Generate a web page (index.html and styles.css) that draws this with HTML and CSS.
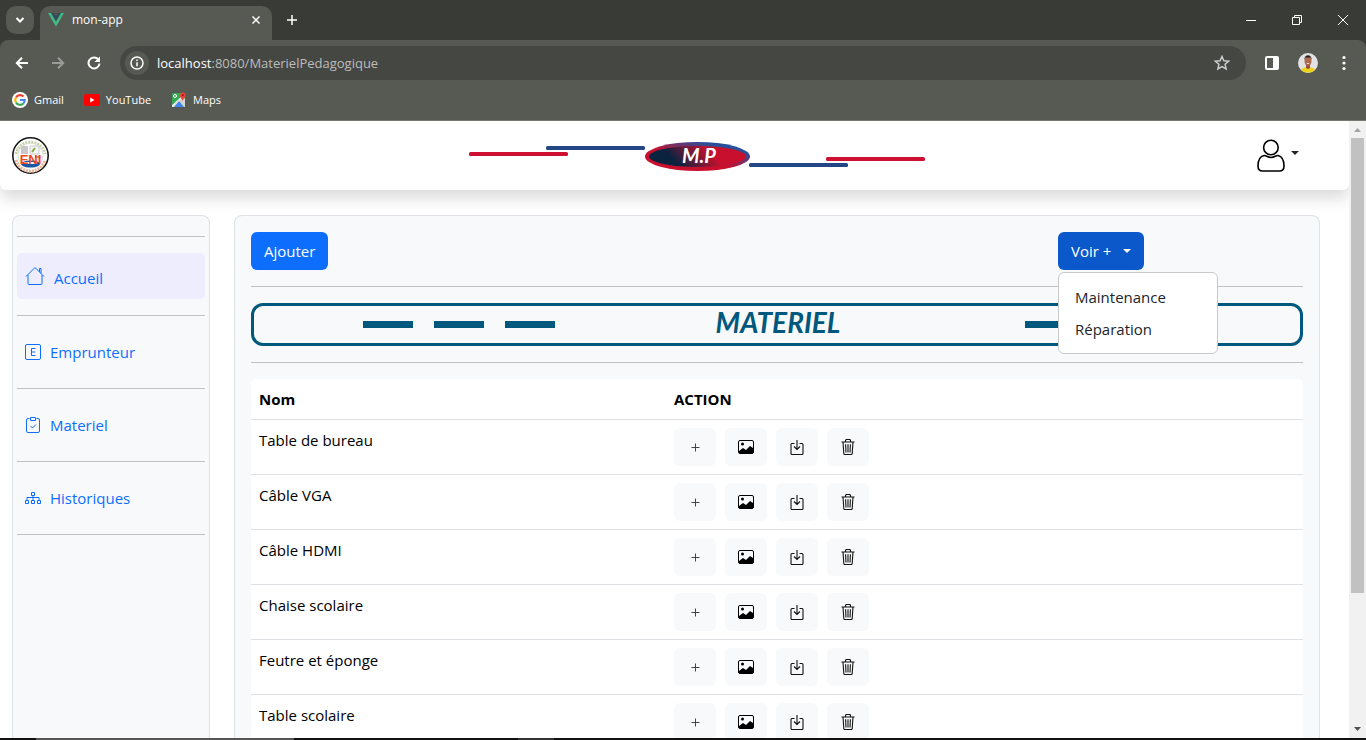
FILE: index.html
```html
<!DOCTYPE html>
<html lang="fr">
<head>
<meta charset="utf-8">
<title>mon-app</title>
<link rel="stylesheet" href="styles.css">
</head>
<body>
<svg class="sprite" aria-hidden="true">
  <symbol id="plus" viewBox="0 0 16 16"><path d="M8.500 4.500v8M4.500 8.500h8" fill="none" stroke="#444" stroke-width="1"/></symbol>
  <symbol id="image" viewBox="0 0 16 16"><rect x=".5" y="1.500" width="15" height="13" rx="1.500" fill="none" stroke="#000"/><circle cx="4.500" cy="5" r="1.500"/><path d="M1 12l4-3 3 2 4-4 3 2v5H1z"/></symbol>
  <symbol id="save" viewBox="0 0 16 16"><path d="M5.500 4.500H3A1 1 0 0 0 2 5.500v9a1 1 0 0 0 1 1h10a1 1 0 0 0 1-1v-9a1 1 0 0 0-1-1h-2.500M8 1v9.500M5 7.500l3 3 3-3" fill="none" stroke="#111" stroke-width="1.100"/></symbol>
  <symbol id="trash" viewBox="0 0 16 16"><path d="M1.500 3h13M5.500 3V1.500a1 1 0 0 1 1-1h3a1 1 0 0 1 1 1V3M3 3l.8 11.500a1 1 0 0 0 1 1h6.400a1 1 0 0 0 1-1L13 3M5.600 5.200l.4 8.300M8 5.200v8.300M10.400 5.200l-.4 8.300" fill="none" stroke="#111" stroke-width="1.100"/></symbol>
</svg>

<header class="browser">
  <div class="tabs">
    <button class="tab-search" aria-label="Rechercher des onglets"><svg width="12" height="12" viewBox="0 0 12 12"><path d="M2.500 4L6 7.500 9.500 4" class="line2"/></svg></button>
    <div class="tab">
      <svg width="16" height="14" viewBox="0 0 16 14"><path d="M0 0h3.200L8 8.300 12.800 0H16L8 13.800z" fill="#41b883"/><path d="M3.200 0h3L8 3.200 9.800 0h3L8 8.300z" fill="#35495e"/></svg>
      <span class="tab-title">mon-app</span>
      <button class="icon-btn" aria-label="Fermer l'onglet"><svg width="10" height="10" viewBox="0 0 10 10"><path d="M1.500 1.500l7 7M8.500 1.500l-7 7" class="line15"/></svg></button>
    </div>
    <button class="icon-btn new-tab" aria-label="Nouvel onglet"><svg width="12" height="12" viewBox="0 0 12 12"><path d="M6 1v10M1 6h10" class="line15"/></svg></button>
    <div class="window-controls">
      <button class="icon-btn" aria-label="Réduire"><svg width="12" height="12" viewBox="0 0 12 12"><path d="M1 6.500h10" class="line1"/></svg></button>
      <button class="icon-btn" aria-label="Restaurer"><svg width="12" height="12" viewBox="0 0 12 12"><path d="M1.500 3.500h7v7h-7zM3.500 3.500v-2h7v7h-2" class="line1"/></svg></button>
      <button class="icon-btn" aria-label="Fermer"><svg width="12" height="12" viewBox="0 0 12 12"><path d="M1 1l10 10M11 1L1 11" class="line1"/></svg></button>
    </div>
  </div>

  <div class="toolbar">
    <button class="icon-btn" aria-label="Précédent"><svg width="14" height="14" viewBox="0 0 14 14"><path d="M13 7H2M7 1.800L1.800 7 7 12.200" class="line2"/></svg></button>
    <button class="icon-btn dim" aria-label="Suivant"><svg width="14" height="14" viewBox="0 0 14 14"><path d="M1 7h11M7 1.800L12.200 7 7 12.200" class="line2"/></svg></button>
    <button class="icon-btn" aria-label="Actualiser"><svg width="14" height="14" viewBox="0 0 14 14"><path d="M11.300 3.500A5.500 5.500 0 1 0 12.500 7.500" class="line2"/><path d="M13 .5v5.500H7.500L9.500 4h1.500V2.500z" fill="#fff"/></svg></button>
    <div class="address">
      <button class="site-info" aria-label="Informations sur le site"><svg width="14" height="14" viewBox="0 0 14 14"><circle cx="7" cy="7" r="6" class="line15"/><path d="M7 6.200v4M7 3.500v1.500" class="line15"/></svg></button>
      <label for="url">localhost</label><input id="url" type="text" value=":8080/MaterielPedagogique">
      <button class="icon-btn" aria-label="Favori"><svg width="16" height="16" viewBox="0 0 16 16"><path d="M8 1.500l1.900 4.300 4.700.4-3.500 3.100 1 4.600L8 11.500l-4.100 2.400 1-4.600L1.400 6.200l4.700-.4z" fill="none" stroke="#ccc" stroke-width="1.500"/></svg></button>
    </div>
    <div class="tools">
      <button class="icon-btn" aria-label="Panneau latéral"><svg width="16" height="16" viewBox="0 0 16 16"><rect x="2" y="2" width="12" height="12" rx="1" class="line2"/><path d="M9 2h5v12H9z" fill="#fff"/></svg></button>
      <button class="icon-btn" aria-label="Profil"><svg width="20" height="20" viewBox="0 0 20 20"><circle cx="10" cy="10" r="10" fill="#e3e2e4"/><path d="M3 17a10 10 0 0 0 14 0c-1-2-3-2.500-4-2.500H7c-1 0-3 .5-4 2.500z" fill="#f0d31f"/><path d="M8 11h4v4l-2 1-2-1z" fill="#925139"/><ellipse cx="10" cy="8" rx="3.500" ry="5" fill="#ad6a4c"/><path d="M6.300 7c-.5-6.500 7.900-6.500 7.400 0l-1-2.500H7.300z" fill="#2b211f"/><path d="M8.800 10.500h2.400" stroke="#fff" stroke-width=".8"/></svg></button>
      <button class="icon-btn" aria-label="Menu"><svg width="16" height="16" viewBox="0 0 16 16" fill="#fff"><circle cx="8" cy="2.500" r="1.600"/><circle cx="8" cy="8" r="1.600"/><circle cx="8" cy="13.500" r="1.600"/></svg></button>
    </div>
  </div>

  <nav class="bookmarks">
    <a href="#"><svg width="16" height="16" viewBox="0 0 16 16"><circle cx="8" cy="8" r="8" fill="#fff"/><g fill="none" stroke-width="2.200"><path d="M11.500 4.500A4.700 4.700 0 0 0 4 5.500" stroke="#ea4335"/><path d="M4 5.500a4.700 4.700 0 0 0 0 5" stroke="#fbbc05"/><path d="M4 10.500a4.700 4.700 0 0 0 7.300 1" stroke="#34a853"/><path d="M8 8h4.700a4.700 4.700 0 0 1-1.400 3.500" stroke="#4285f4"/></g></svg>Gmail</a>
    <a href="#"><svg width="16" height="16" viewBox="0 0 16 16"><rect y="2" width="16" height="12" rx="2" fill="#f00"/><path d="M6.200 5.500v5L10.500 8z" fill="#fff"/></svg>YouTube</a>
    <a href="#"><svg width="16" height="16" viewBox="0 0 16 16"><rect x="1" y="1" width="13" height="14" rx="1" fill="#34a853"/><path d="M3 15l5-6 5 6z" fill="#4285f4"/><path d="M1 15V13L11 4l3 4-6 1-5 6z" fill="#e8e8e8"/><path d="M8 9l6-3v9h-1z" fill="#d5d5d5"/><circle cx="4" cy="4" r="1.500" fill="none" stroke="#fff"/><path d="M11.500 9C11 7 9 6 9 3.300a2.800 2.800 0 0 1 5.600 0C14.600 6 12 7 11.500 9z" fill="#ea4335"/><circle cx="11.800" cy="3.300" r="1" fill="#8b1a12"/></svg>Maps</a>
  </nav>
</header>

<div class="viewport">
  <div class="page">
    <header class="app-header">
      <a href="#" class="logo" aria-label="ENI">
        <svg width="37" height="37" viewBox="0 0 37 37"><circle cx="18.500" cy="18.500" r="17.700" fill="#fff" stroke="#171717" stroke-width="1.600"/><path d="M4 17a14.800 14.800 0 0 1 29 0" fill="none" stroke="#c5d3a5" stroke-width="3" stroke-dasharray="2 1"/><path d="M4 23a15 15 0 0 0 29 0" fill="none" stroke="#edb297" stroke-width="3" stroke-dasharray="2 1"/><circle cx="18.500" cy="18.500" r="12.500" fill="none" stroke="#ddd"/><path d="M9 9h7v8H9z" fill="#c9c9c9"/><path d="M18 9h9v8h-9z" fill="#f4f4f4" stroke="#ccc"/><path d="M20 15l3-4" stroke="#86aa3e" stroke-width="2"/><path d="M23 19l8 1-8 1z" fill="#777"/><ellipse cx="18.500" cy="27" rx="9.500" ry="3.500" fill="#1c57a5"/><path d="M12 26h13" stroke="#fff" stroke-width="2"/><text x="18.500" y="27" class="logo-text">ENI</text></svg>
      </a>
      <svg class="mp" width="456" height="30" viewBox="0 0 456 30">
        <defs>
          <linearGradient id="rim" x1="0" y1=".8" x2=".7" y2="0"><stop offset=".45" stop-color="#c8102e"/><stop offset=".9" stop-color="#28509a"/></linearGradient>
          <linearGradient id="core" x1="0" y1=".5" x2="1" y2=".3"><stop offset=".22" stop-color="#0c2340"/><stop offset=".65" stop-color="#c8102e"/></linearGradient>
        </defs>
        <rect y="11" width="99" height="4" rx="1.500" fill="#ce1033"/><rect x="77" y="5" width="99" height="4" rx="1.500" fill="#234684"/>
        <rect x="280" y="22" width="99" height="4" rx="1.500" fill="#234684"/><rect x="357" y="16" width="99" height="4" rx="1.500" fill="#ce1033"/>
        <ellipse cx="228.500" cy="15.500" rx="52.500" ry="14.500" fill="url(#rim)"/><ellipse cx="228.500" cy="15.500" rx="48.500" ry="10.500" fill="url(#core)"/>
        <text x="230" y="22" class="mp-text">M.P</text>
      </svg>
      <button class="user" aria-label="Compte"><svg width="28" height="33" viewBox="0 0 28 33"><path d="M13.900 1.200a7.300 7.300 0 1 1 0 14.600 7.300 7.300 0 0 1 0-14.600zM7 16.500C3 17.500 1 22 1 27c0 3 1.500 5 4.500 5h17c3 0 4.500-2 4.500-5 0-5-2-9.500-6-10.500-2-.4-3.500 2-7 2s-5-2.400-7-2z" fill="none" stroke="#000" stroke-width="1.600"/></svg><span class="caret"></span></button>
    </header>

    <div class="layout">
      <nav class="sidebar">
        <hr>
        <a href="#" class="active"><svg width="20" height="20" viewBox="0 0 20 20"><path d="M1 10.500L10 1.500l9 9M3 9v8.500a1 1 0 0 0 1 1h12a1 1 0 0 0 1-1V9M14.500 6V2.500H16v5" class="blue"/></svg><span>Accueil</span></a>
        <hr>
        <a href="#"><svg width="16" height="16" viewBox="0 0 16 16"><rect x=".5" y=".5" width="15" height="15" rx="1.500" class="blue"/><path d="M10.500 4.500h-4v7h4M6.500 8h3.800" class="blue"/></svg>Emprunteur</a>
        <hr>
        <a href="#"><svg width="16" height="16" viewBox="0 0 16 16"><path d="M4.500 1.500H3a1.500 1.500 0 0 0-1.500 1.500v11A1.500 1.500 0 0 0 3 15.500h10a1.500 1.500 0 0 0 1.500-1.500V3A1.500 1.500 0 0 0 13 1.500h-1.500M5.500.5h5v3h-5zM5.500 9l2 2 3.500-3.500" class="blue"/></svg>Materiel</a>
        <hr>
        <a href="#"><svg width="16" height="16" viewBox="0 0 16 16"><path d="M6.500 2.500h3v3h-3zM8 5.500v4.500M2 10V7.500h12V10M.5 10.500h3v3h-3zM6.500 10.500h3v3h-3zM12.500 10.500h3v3h-3z" class="blue"/></svg>Historiques</a>
        <hr>
      </nav>

      <main class="card">
        <div class="actions">
          <div><button class="btn">Ajouter</button></div>
          <div class="dropdown">
            <button class="btn open">Voir +<span class="caret"></span></button>
            <div class="menu"><a href="#">Maintenance</a><a href="#">Réparation</a></div>
          </div>
        </div>
        <hr>
        <div class="banner">
          <div class="dashes"><i></i><i></i><i></i></div>
          <h1>MATERIEL</h1>
          <div class="dashes"><i></i><i></i><i></i></div>
        </div>
        <hr>
        <table>
          <thead><tr><th class="name">Nom</th><th>ACTION</th></tr></thead>
          <tbody>
            <tr><td>Table de bureau</td><td><div class="row-actions"><button aria-label="Ajouter"><svg><use href="#plus"/></svg></button><button aria-label="Image"><svg><use href="#image"/></svg></button><button aria-label="Enregistrer"><svg><use href="#save"/></svg></button><button aria-label="Supprimer"><svg><use href="#trash"/></svg></button></div></td></tr>
            <tr><td>Câble VGA</td><td><div class="row-actions"><button aria-label="Ajouter"><svg><use href="#plus"/></svg></button><button aria-label="Image"><svg><use href="#image"/></svg></button><button aria-label="Enregistrer"><svg><use href="#save"/></svg></button><button aria-label="Supprimer"><svg><use href="#trash"/></svg></button></div></td></tr>
            <tr><td>Câble HDMI</td><td><div class="row-actions"><button aria-label="Ajouter"><svg><use href="#plus"/></svg></button><button aria-label="Image"><svg><use href="#image"/></svg></button><button aria-label="Enregistrer"><svg><use href="#save"/></svg></button><button aria-label="Supprimer"><svg><use href="#trash"/></svg></button></div></td></tr>
            <tr><td>Chaise scolaire</td><td><div class="row-actions"><button aria-label="Ajouter"><svg><use href="#plus"/></svg></button><button aria-label="Image"><svg><use href="#image"/></svg></button><button aria-label="Enregistrer"><svg><use href="#save"/></svg></button><button aria-label="Supprimer"><svg><use href="#trash"/></svg></button></div></td></tr>
            <tr><td>Feutre et éponge</td><td><div class="row-actions"><button aria-label="Ajouter"><svg><use href="#plus"/></svg></button><button aria-label="Image"><svg><use href="#image"/></svg></button><button aria-label="Enregistrer"><svg><use href="#save"/></svg></button><button aria-label="Supprimer"><svg><use href="#trash"/></svg></button></div></td></tr>
            <tr><td>Table scolaire</td><td><div class="row-actions"><button aria-label="Ajouter"><svg><use href="#plus"/></svg></button><button aria-label="Image"><svg><use href="#image"/></svg></button><button aria-label="Enregistrer"><svg><use href="#save"/></svg></button><button aria-label="Supprimer"><svg><use href="#trash"/></svg></button></div></td></tr>
          </tbody>
        </table>
      </main>
    </div>
  </div>
  <div class="scrollbar" aria-hidden="true">
    <svg width="17" height="17" viewBox="0 0 17 17"><path d="M5 11l3.500-4 3.500 4z" fill="#a3a3a3"/></svg>
    <div class="track"><div class="thumb"></div></div>
    <svg width="17" height="17" viewBox="0 0 17 17"><path d="M5 6l3.500 4L12 6z" fill="#505050"/></svg>
  </div>
</div>
<div class="taskbar"></div>
</body>
</html>
```

FILE: styles.css
```css
* { box-sizing: border-box; }

body {
  margin: 0;
  height: 100vh;
  display: flex;
  flex-direction: column;
  overflow: hidden;
  font: 15px/24px "Open Sans", "Noto Sans", sans-serif;
  color: #212529;
  background: #fff;
}

button, input { font: inherit; color: inherit; }
button { border: 0; padding: 0; background: none; cursor: pointer; }
a { text-decoration: none; }
svg { display: block; flex: none; }
hr { margin: 16px 0; border: 0; border-top: 1px solid #bfc1c3; }
.sprite { position: absolute; width: 0; height: 0; }

.line1, .line15, .line2 { fill: none; stroke: #fff; }
.line15 { stroke-width: 1.5px; }
.line2 { stroke-width: 2px; }
.blue { fill: none; stroke: #0d6efd; }
.caret { border: 4px solid transparent; border-top-color: currentColor; border-bottom: 0; }

/* Browser chrome */
.browser {
  flex: none;
  background: #393b37;
  color: #fff;
  font-size: 12px;
  line-height: 16px;
}
.icon-btn { display: grid; place-items: center; flex: none; }
.dim { opacity: .4; }

.tabs { display: flex; align-items: center; height: 40px; padding-left: 6px; }
.tab-search {
  display: grid;
  place-items: center;
  width: 28px;
  height: 28px;
  border-radius: 10px;
  background: #575a52;
}
.tab {
  display: flex;
  align-items: center;
  align-self: flex-end;
  gap: 8px;
  width: 232px;
  height: 34px;
  margin-left: 6px;
  padding: 0 11px 6px 8px;
  border-radius: 10px 10px 0 0;
  background: #575a52;
}
.tab-title { flex: 1; }
.new-tab { margin-left: 14px; }
.window-controls { display: flex; margin-left: auto; }
.window-controls .icon-btn { width: 46px; height: 40px; }

.toolbar {
  display: flex;
  align-items: center;
  gap: 22px;
  height: 46px;
  padding: 0 14px 0 15px;
  border-radius: 8px 8px 0 0;
  background: #575a52;
}
.address {
  display: flex;
  align-items: center;
  flex: 1;
  height: 34px;
  margin-left: -3px;
  padding: 0 16px 0 5px;
  border-radius: 17px;
  background: #454743;
  font-size: 13px;
  line-height: 20px;
}
.address input {
  flex: 1;
  min-width: 0;
  padding: 0;
  border: 0;
  outline: 0;
  background: none;
  color: #bcbdbb;
}
.site-info {
  display: grid;
  place-items: center;
  width: 24px;
  height: 24px;
  margin-right: 8px;
  border-radius: 50%;
  background: #575a52;
}
.tools { display: flex; align-items: center; gap: 18px; margin-left: -4px; }

.bookmarks {
  display: flex;
  gap: 20px;
  height: 35px;
  padding: 6px 12px;
  border-bottom: 1px solid #777973;
  background: #575a52;
  font-size: 11px;
}
.bookmarks a { display: flex; align-items: center; gap: 6px; height: 16px; color: #fff; }

/* Application */
.viewport { display: flex; flex: 1; min-height: 0; }
.page { flex: 1; min-width: 0; display: flex; flex-direction: column; overflow: hidden; }

.app-header {
  display: grid;
  grid-template-columns: 35.5% auto 1fr;
  align-items: center;
  flex: none;
  height: 69px;
  padding: 0 50px 0 12px;
  border-radius: 0 0 6px 6px;
  background: #fff;
  box-shadow: 0 8px 16px rgba(0, 0, 0, .15);
}
.logo-text { font: bold 13px "Liberation Sans Narrow", "Liberation Sans", sans-serif; fill: #f0471c; text-anchor: middle; }
.mp-text { font: italic bold 20px Lato, sans-serif; fill: #fff; text-anchor: middle; }
.user { display: flex; align-items: center; gap: 6px; justify-self: end; }
.user .caret { margin-bottom: 6px; }

.layout {
  display: grid;
  grid-template-columns: 198px 1fr;
  gap: 24px;
  flex: 1;
  min-height: 0;
  padding: 25px 29px 0 12px;
}
.sidebar, .card {
  border: 1px solid #dee2e6;
  border-bottom: 0;
  border-radius: 8px 8px 0 0;
  background: #f8f9fb;
}
.sidebar { padding: 4px; }
.sidebar a {
  display: flex;
  align-items: center;
  gap: 9px;
  height: 40px;
  padding: 0 8px;
  color: #0d6efd;
}
.sidebar .active { height: 46px; border-radius: 5px; background: #eeedfe; }
.sidebar .active span { padding-top: 4px; }

.card { padding: 16px; min-width: 0; }
.actions { display: grid; grid-template-columns: 1fr 245px; }
.btn {
  display: flex;
  align-items: center;
  height: 38px;
  padding: 0 13px;
  border-radius: 6px;
  background: #0d6efd;
  color: #fff;
}
.btn.open { gap: 12px; background: #0a58ca; }
.dropdown { position: relative; }
.menu {
  position: absolute;
  top: 40px;
  left: 0;
  z-index: 1;
  width: 160px;
  padding: 8px 0;
  border: 1px solid #c8c9ca;
  border-radius: 6px;
  background: #fff;
}
.menu a { display: block; padding: 4px 16px; color: #212529; }

.banner {
  display: flex;
  align-items: center;
  justify-content: space-between;
  height: 43px;
  padding: 0 83px 0 109px;
  border: 3px solid #00587d;
  border-radius: 12px;
  color: #00587d;
}
.banner h1 { margin: 0; padding: 0 24px 6px 0; font: italic bold 28px/32px Lato, sans-serif; }
.dashes { display: flex; gap: 21px; }
.dashes i { width: 50px; height: 7px; background: currentColor; }

table { width: 100%; border-spacing: 0; color: #000; }
th, td {
  padding: 8px;
  border-bottom: 1px solid #dee2e6;
  background: #fff;
  text-align: left;
  vertical-align: top;
}
.name { width: 415px; }
thead th:first-child { border-top-left-radius: 5px; }
thead th:last-child { border-top-right-radius: 5px; }
.row-actions { display: flex; gap: 9px; }
.row-actions button {
  display: grid;
  place-items: center;
  width: 42px;
  height: 38px;
  border-radius: 6px;
  background: #f8f9fa;
}
.row-actions svg { width: 16px; height: 16px; }

.scrollbar { display: flex; flex-direction: column; width: 17px; background: #f1f1f1; }
.track { flex: 1; padding: 0 2px; }
.thumb { height: 78%; background: #c1c1c1; }

.taskbar {
  flex: none;
  height: 2px;
  background: linear-gradient(90deg, #111 36px, #555 36px 294px, #111 294px 518px, #333 518px 554px, #111 554px);
}
```
